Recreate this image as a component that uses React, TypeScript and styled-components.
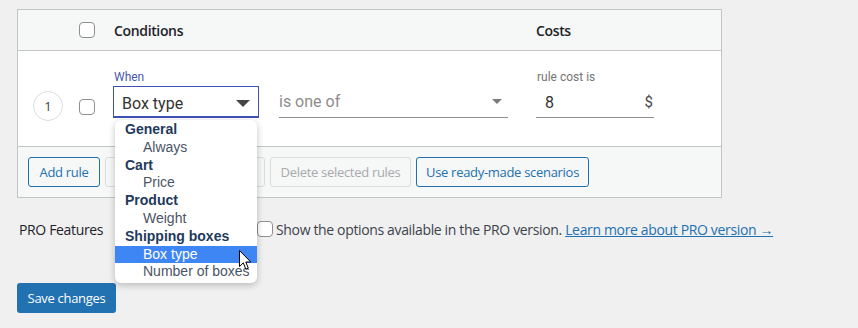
import React from "react"
import styled, { createGlobalStyle } from "styled-components"

const wpFont = `"Open Sans", "Noto Sans", sans-serif`
const muiFont = `Roboto, "Liberation Sans", sans-serif`

const GlobalStyle = createGlobalStyle`
  html, body {
    margin: 0;
    background: #f0f0f1;
    font-family: ${wpFont};
    color: #1d2327;
  }
  * { box-sizing: border-box; }
`

const Page = styled.div`
  width: 858px;
  height: 328px;
  padding: 9px 0 0 17px;
  position: relative;
  overflow: hidden;
`

const Table = styled.div`
  width: 705px;
  border: 1px solid #c3c4c7;
  background: #fff;
`

const Row = styled.div`
  display: grid;
  grid-template-columns: 61px 35px 422px 1fr;
`

const HeaderRow = styled(Row)`
  height: 41px;
  align-items: center;
  background: #f6f7f7;
  border-bottom: 1px solid #c3c4c7;
`

const HeaderCell = styled.div`
  font-size: 14px;
  font-weight: 600;
  letter-spacing: -0.35px;
  color: #1d2327;
`

const RuleRow = styled(Row)`
  height: 96px;
  align-items: start;
  padding-top: 19px;
  border-bottom: 1px solid #c3c4c7;
`

const NumCell = styled.div`
  padding: 21px 0 0 15px;
`

const NumCircle = styled.div`
  width: 30px;
  height: 30px;
  border: 1px solid #dcdcde;
  border-radius: 50%;
  display: flex;
  align-items: center;
  justify-content: center;
  font-size: 13px;
  color: #3c434a;
`

const Checkbox = styled.span<{ $offset?: number }>`
  display: block;
  width: 16px;
  height: 16px;
  margin-top: ${({ $offset }) => $offset ?? 0}px;
  border: 1px solid #8c8f94;
  border-radius: 4px;
  background: #fff;
`

const Fields = styled.div`
  display: flex;
  gap: 20px;
  margin-left: -1px;
`

const Field = styled.div<{ $width: number }>`
  width: ${({ $width }) => $width}px;
  position: relative;
  font-family: ${muiFont};
`

const FieldLabel = styled.div<{ $focused?: boolean }>`
  height: 16px;
  font-size: 12px;
  line-height: 14px;
  padding-left: 1px;
  color: ${({ $focused }) => ($focused ? "#4a57b0" : "#757575")};
`

const SelectBox = styled.div<{ $focused?: boolean }>`
  height: 32px;
  display: flex;
  align-items: center;
  justify-content: space-between;
  font-size: 16px;
  ${({ $focused }) =>
    $focused
      ? `
    border: 1px solid #3f51b5;
    border-bottom: 2px solid #3f51b5;
    padding: 3px 8px 0 8px;
    color: #333;
  `
      : `
    border-bottom: 1px solid #8f8f8f;
    padding: 0 6px 0 0;
    color: #8c8c8c;
  `}
`

const Caret = styled.span<{ $dark?: boolean }>`
  width: 0;
  height: 0;
  border-left: ${({ $dark }) => ($dark ? 7 : 5)}px solid transparent;
  border-right: ${({ $dark }) => ($dark ? 7 : 5)}px solid transparent;
  border-top: ${({ $dark }) => ($dark ? 7 : 5)}px solid ${({ $dark }) => ($dark ? "#454545" : "#7a7a7a")};
`

const CostInput = styled.div`
  height: 32px;
  border-bottom: 1px solid #8f8f8f;
  display: flex;
  align-items: center;
  justify-content: space-between;
  padding: 1px 0 0 9px;
  font-size: 16px;
  color: #333;
`

const Currency = styled.span`
  font-size: 15px;
  color: #444;
  padding-right: 1px;
`

const Dropdown = styled.div`
  position: absolute;
  top: 50px;
  left: 2px;
  width: 142px;
  background: #fff;
  border-radius: 6px;
  box-shadow: 0 2px 7px rgba(0, 0, 0, 0.24);
  padding: 1px 0 2px;
  font-family: "Liberation Sans", Arial, sans-serif;
  font-size: 14px;
  z-index: 5;
`

const Option = styled.div<{ $group?: boolean; $selected?: boolean }>`
  height: 17.8px;
  line-height: 17.8px;
  white-space: nowrap;
  padding-left: ${({ $group }) => ($group ? 10 : 28)}px;
  font-weight: ${({ $group }) => ($group ? 700 : 400)};
  color: ${({ $group, $selected }) =>
    $selected ? "#fff" : $group ? "#1f3a5c" : "#4b5466"};
  background: ${({ $selected }) => ($selected ? "#3f86f5" : "transparent")};
`

const Footer = styled.div`
  display: flex;
  gap: 5px;
  padding: 10px;
  background: #f6f7f7;
`

const Button = styled.button<{ $disabled?: boolean; $width: number }>`
  width: ${({ $width }) => $width}px;
  height: 30px;
  padding: 0;
  border-radius: 3px;
  font-family: ${wpFont};
  font-size: 13px;
  letter-spacing: -0.3px;
  background: #f6f7f7;
  border: 1px solid ${({ $disabled }) => ($disabled ? "#dcdcde" : "#2271b1")};
  color: ${({ $disabled }) => ($disabled ? "#a7aaad" : "#2271b1")};
`

const ProRow = styled.div`
  display: flex;
  align-items: center;
  height: 20px;
  margin-top: 21px;
  padding-left: 2px;
  font-size: 14px;
  letter-spacing: -0.35px;
`

const ProLabel = styled.div`
  width: 238px;
  font-weight: 500;
  color: #1d2327;
`

const ProText = styled.span`
  margin-left: 3px;
  color: #3c434a;
`

const ProLink = styled.a`
  color: #2271b1;
  text-decoration: underline;
`

const SaveButton = styled.button`
  margin-top: 44px;
  width: 99px;
  height: 30px;
  border: none;
  border-radius: 3px;
  background: #2271b1;
  color: #fff;
  font-family: ${wpFont};
  font-size: 13px;
  letter-spacing: -0.3px;
  padding: 0;
`

const Cursor = styled.svg`
  position: absolute;
  left: 239px;
  top: 250px;
  z-index: 10;
`

const options: { label: string; group?: boolean }[] = [
  { label: "General", group: true },
  { label: "Always" },
  { label: "Cart", group: true },
  { label: "Price" },
  { label: "Product", group: true },
  { label: "Weight" },
  { label: "Shipping boxes", group: true },
  { label: "Box type" },
  { label: "Number of boxes" },
]

export default function App() {
  return (
    <>
      <GlobalStyle />
      <Page>
        <Table>
          <HeaderRow>
            <div />
            <Checkbox />
            <HeaderCell>Conditions</HeaderCell>
            <HeaderCell>Costs</HeaderCell>
          </HeaderRow>
          <RuleRow>
            <NumCell>
              <NumCircle>1</NumCircle>
            </NumCell>
            <Checkbox $offset={29} />
            <Fields>
              <Field $width={146}>
                <FieldLabel $focused>When</FieldLabel>
                <SelectBox $focused>
                  Box type
                  <Caret $dark />
                </SelectBox>
                <Dropdown>
                  {options.map((o) => (
                    <Option key={o.label} $group={o.group} $selected={o.label === "Box type"}>
                      {o.label}
                    </Option>
                  ))}
                </Dropdown>
              </Field>
              <Field $width={229}>
                <FieldLabel />
                <SelectBox>
                  is one of
                  <Caret />
                </SelectBox>
              </Field>
            </Fields>
            <Field $width={118}>
              <FieldLabel>rule cost is</FieldLabel>
              <CostInput>
                8<Currency>$</Currency>
              </CostInput>
            </Field>
          </RuleRow>
          <Footer>
            <Button $width={72}>Add rule</Button>
            <Button $width={160} $disabled>
              Duplicate selected rules
            </Button>
            <Button $width={141} $disabled>
              Delete selected rules
            </Button>
            <Button $width={173}>Use ready-made scenarios</Button>
          </Footer>
        </Table>
        <ProRow>
          <ProLabel>PRO Features</ProLabel>
          <Checkbox />
          <ProText>
            Show the options available in the PRO version.{" "}
            <ProLink href="#">Learn more about PRO version →</ProLink>
          </ProText>
        </ProRow>
        <SaveButton>Save changes</SaveButton>
        <Cursor width="13" height="21" viewBox="0 0 13 21">
          <path
            d="M0.5 0.5 L0.5 16.5 L4.3 12.8 L6.8 19.2 L9.3 18.2 L6.8 12 L11.8 12 Z"
            fill="#fff"
            stroke="#000"
            strokeWidth="1"
            strokeLinejoin="round"
          />
        </Cursor>
      </Page>
    </>
  )
}
